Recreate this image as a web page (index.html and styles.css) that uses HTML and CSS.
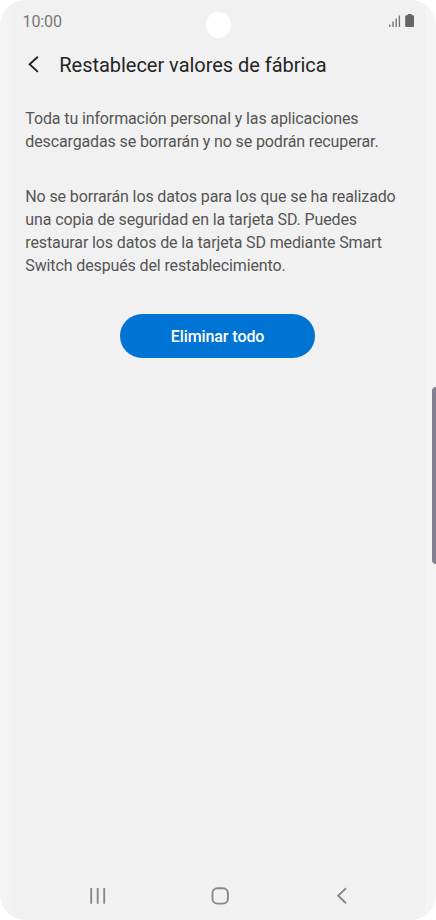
FILE: index.html
```html
<!DOCTYPE html>
<html lang="es">
<head>
<meta charset="utf-8">
<title>Restablecer valores de fábrica</title>
<link rel="stylesheet" href="styles.css">
</head>
<body>
<main class="phone">
  <div class="camera"></div>
  <div class="edge-handle"></div>
  <div class="status">
    <span class="time">10:00</span>
    <svg class="status-icons" width="26" height="14" viewBox="0 0 26 14">
      <path d="M.8 10.500v2.500M4 7.500v5.500M7.200 4.500v8.500M10.400 1.500v11.500" stroke="#777" stroke-width="1.400"/>
      <path d="M18.700 0h4v1.300h1.300q1 0 1 1V12q0 1-1 1h-6.800q-1 0-1-1V2.300q0-1 1-1h1.500z" fill="#666"/>
    </svg>
  </div>
  <header class="header">
    <svg class="back" width="12" height="18" viewBox="0 0 12 18"><path d="M9.900 .7 1.600 8.300l8.300 7.600" fill="none" stroke="#252525" stroke-width="1.900"/></svg>
    <h1 class="title">Restablecer valores de fábrica</h1>
  </header>
  <section class="content">
    <p class="text">Toda tu información personal y las aplicaciones<br>descargadas se borrarán y no se podrán recuperar.</p>
    <p class="text">No se borrarán los datos para los que se ha realizado<br>una copia de seguridad en la tarjeta SD. Puedes<br>restaurar los datos de la tarjeta SD mediante Smart<br>Switch después del restablecimiento.</p>
  </section>
  <button class="erase">Eliminar todo</button>
  <nav class="nav">
    <svg width="18" height="18" viewBox="0 0 18 18"><path d="M3.200 1v15.700M9.700 1v15.700M16.200 1v15.700" stroke="#888" stroke-width="1.900"/></svg>
    <svg width="18" height="18" viewBox="0 0 18 18"><rect x="1.500" y="1.200" width="15.400" height="15.400" rx="4.800" fill="none" stroke="#888" stroke-width="1.900"/></svg>
    <svg width="18" height="18" viewBox="0 0 18 18"><path d="M13 1.200 5.200 8.700l7.800 7.500" fill="none" stroke="#888" stroke-width="1.900"/></svg>
  </nav>
</main>
</body>
</html>
```
FILE: styles.css
```css
body {
  margin: 0;
  background: #fff;
  font-family: Roboto, sans-serif;
}

.phone {
  position: relative;
  display: flex;
  flex-direction: column;
  box-sizing: border-box;
  width: 436px;
  height: 920px;
  overflow: hidden;
  border-radius: 25px;
  background: linear-gradient(90deg, #f5f5f5 0, #f3f3f3 13px, #f1f1f1 14px, #f1f1f1 425px, #f4f4f4 426px, #f5f5f5 100%);
}

.camera {
  position: absolute;
  left: 205.5px;
  top: 12px;
  width: 25.5px;
  height: 25.5px;
  border-radius: 50%;
  background: #fff;
}

.edge-handle {
  position: absolute;
  right: 0;
  top: 387px;
  width: 4px;
  height: 177px;
  border-radius: 5px 0 0 5px;
  background: #82808f;
}

.status {
  display: flex;
  justify-content: space-between;
  align-items: center;
  height: 42px;
  padding: 0 21px 0 22.500px;
}

.time {
  font-size: 16px;
  letter-spacing: -0.1px;
  color: #777;
}

.status-icons {
  display: block;
}

.header {
  display: flex;
  align-items: center;
  gap: 19.300px;
  height: 46px;
  padding-left: 28px;
}

.back {
  flex: none;
}

.title {
  margin: 0;
  font-size: 20px;
  font-weight: 400;
  line-height: 24px;
  letter-spacing: -0.030px;
  color: #252525;
  white-space: nowrap;
}

.content {
  display: flex;
  flex-direction: column;
  gap: 32px;
  padding: 19px 0 0 25.300px;
}

.text {
  margin: 0;
  font-size: 16px;
  line-height: 23px;
  letter-spacing: -0.124px;
  color: #555;
  white-space: nowrap;
}

.erase {
  align-self: center;
  width: 195px;
  height: 44px;
  margin-top: 37px;
  margin-right: 1px;
  padding: 2px 0 0;
  border: 0;
  border-radius: 22px;
  background: #0074d4;
  color: #fff;
  font: 500 16px/42px Roboto, sans-serif;
  letter-spacing: -0.080px;
}

.nav {
  display: flex;
  justify-content: space-between;
  margin-top: auto;
  padding: 0 85px 15px 88px;
}
```
